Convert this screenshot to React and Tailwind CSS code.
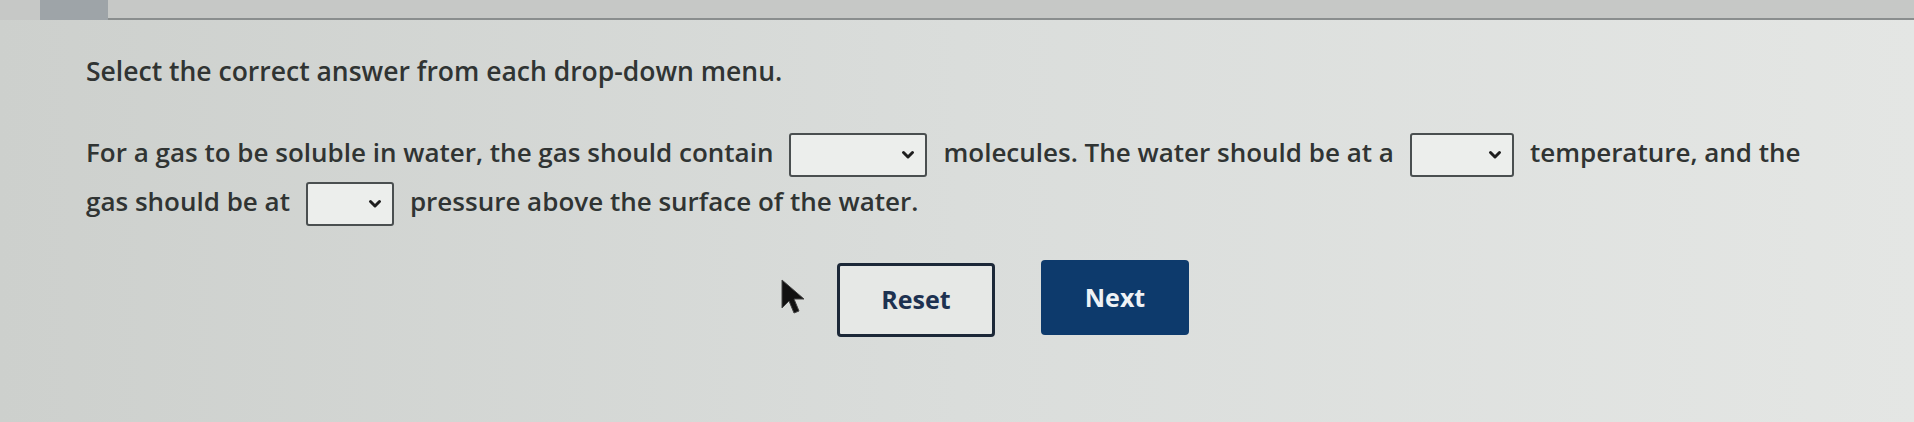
function Select({ w }) {
  return (
    <span
      className={`inline-flex ${w} h-[44px] mx-[16px] align-middle items-center justify-end pr-[9px] border-2 border-[#4a4f50] rounded-[3px] bg-[#eceeec]`}
    >
      <svg className="w-[16px] h-[16px] text-[#1e1e1e]" viewBox="0 0 16 16" fill="none" stroke="currentColor">
        <path d="M3.5 5.5 8 10l4.5-4.5" strokeWidth={3} strokeLinecap="round" strokeLinejoin="round" />
      </svg>
    </span>
  );
}

export default function App() {
  return (
    <div
      className="relative w-full h-[422px] overflow-hidden bg-gradient-to-r from-[#cdd0cd] via-[#dadddb] to-[#e4e6e4] text-[#303433]"
      style={{ fontFamily: '"Open Sans", "Noto Sans", sans-serif' }}
    >
      {/* top strip */}
      <div className="flex items-end pl-[40px] h-[20px] bg-[#c6c8c6]">
        <div className="w-[68px] h-[20px] bg-[#9ea4a8]"></div>
        <div className="flex-1 border-b-2 border-[#8a8e8e]"></div>
      </div>

      <div className="pl-[86px]">
        <h1 className="mt-[34px] text-[26.5px] leading-[34px] font-semibold">
          Select the correct answer from each drop-down menu.
        </h1>

        <p className="mt-[40px] text-[26px] leading-[48px] font-semibold max-w-[1800px]">
          For a gas to be soluble in water, the gas should contain
          <Select w="w-[138px]" />
          molecules. The water should be at a
          <Select w="w-[104px]" />
          temperature, and the
          <br />
          gas should be at
          <Select w="w-[88px]" />
          pressure above the surface of the water.
        </p>

        <div className="flex gap-[46px] mt-[37px] pl-[751px]">
          <button className="w-[158px] h-[74px] border-[3px] border-[#1c2838] rounded-[4px] bg-[#e6e8e6] text-[25px] font-bold text-[#1d3150]">
            Reset
          </button>
          <button className="w-[148px] h-[75px] -mt-[3px] rounded-[4px] bg-[#0d3a6c] text-[25px] font-bold text-[#eef2f6]">
            Next
          </button>
        </div>
      </div>

      {/* mouse pointer */}
      <svg className="absolute left-[780px] top-[278px] w-[28px] h-[38px]" viewBox="0 0 28 38">
        <path d="M2 2 L2 30 L9 23 L14 35 L19 33 L14 21 L24 21 Z" fill="#111" stroke="#444" strokeWidth="1" strokeLinejoin="round" />
      </svg>
    </div>
  );
}
